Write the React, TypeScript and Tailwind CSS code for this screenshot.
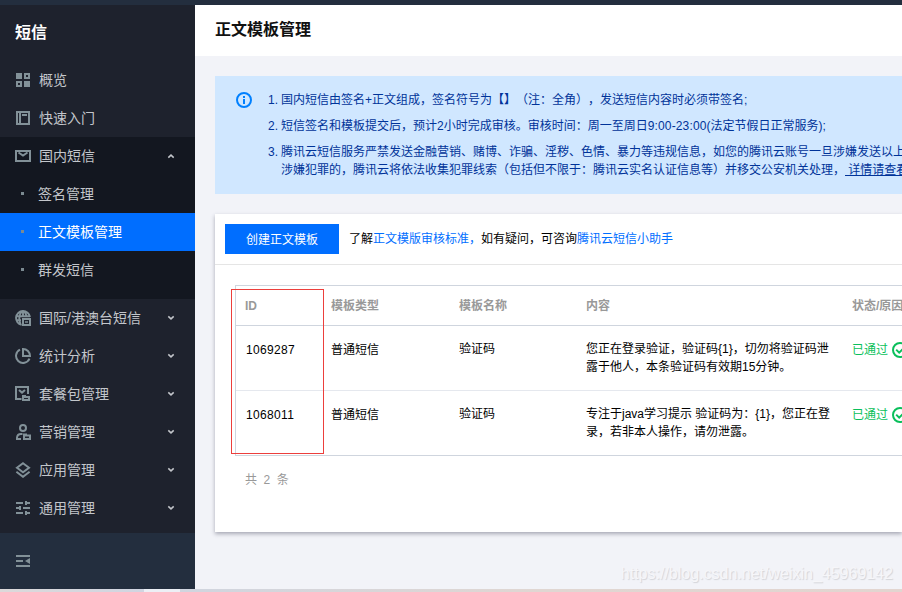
import React from "react";

const ICONS: Record<string, React.ReactNode> = {
  overview: (
    <g fill="currentColor" shapeRendering="crispEdges">
      <path d="M1 1h6v6H1z" />
      <path fillRule="evenodd" d="M9 1h6v6H9zM11 3v2h2V3z" />
      <path fillRule="evenodd" d="M1 9h6v6H1zM3 11v2h2v-2z" />
      <path d="M9 9h6v6H9z" />
    </g>
  ),
  guide: (
    <g fill="currentColor" shapeRendering="crispEdges">
      <path fillRule="evenodd" d="M1 1h14v14H1zM3 3v10h1V3zM6 3v10h7V3z" />
      <path d="M7 4h5v2H7z" />
    </g>
  ),
  mail: (
    <g fill="none" stroke="currentColor" strokeWidth="2">
      <path d="M1 3h14v10H1z" shapeRendering="crispEdges" />
      <path d="M3.5 4.5L8 7.6l4.5-3.1" />
    </g>
  ),
  globe: (
    <g fill="none" stroke="currentColor" strokeWidth="1.9">
      <path d="M15 7A7 7 0 1 0 6.6 14.9M8 1v6M1 6.2h14M1.2 10.2H6M5.6 14.5C3.8 10 3.9 5 6.6 1.5M9.2 1.5c1.6 1.6 2.3 3.4 2.4 5.2" />
      <path d="M8 9h7v6H8z" strokeWidth="2" />
      <path d="M10 12h3" strokeWidth="1.4" />
    </g>
  ),
  chart: (
    <g fill="none" stroke="currentColor" strokeWidth="2">
      <path d="M5 1.6a7 7 0 1 0 9.5 9" />
      <path d="M8 1a7 7 0 0 1 7 7H8z" />
    </g>
  ),
  pack: (
    <g fill="none" stroke="currentColor" strokeWidth="2">
      <path d="M6.5 13H1V1h12v7" />
      <path d="M4 4l3 2.6L10 4" />
      <path d="M8 11h6v3H8zM7 10h4" />
    </g>
  ),
  person: (
    <g fill="none" stroke="currentColor" strokeWidth="2">
      <circle cx="8" cy="4" r="3" />
      <path d="M7.5 10H6a4 4 0 0 0-4 3.5V15h4" />
      <path d="M9 11.5h6V15H9zM8 10.5h4" />
    </g>
  ),
  layers: (
    <g fill="none" stroke="currentColor" strokeWidth="2">
      <path d="M8 1.3l6 4.5-6 4.5-6-4.5z" />
      <path d="M1.4 9.8L8 14.8l6.6-5" />
    </g>
  ),
  sliders: (
    <g fill="currentColor" shapeRendering="crispEdges">
      <path d="M1 2h7v2H1zM10 1h2v1h3v2h-3v1h-2zM1 7h3V6h2v4H4V9H1zM8 7h7v2H8zM1 12h7v2H1zM10 11h2v1h3v2h-3v1h-2z" />
    </g>
  ),
  fold: (
    <g fill="currentColor">
      <path d="M1 2h14v2H1zM1 7h7v2H1zM1 12h14v2H1z" />
      <path d="M15 5v6l-5-3z" />
    </g>
  ),
};

function Icon({ name }: { name: string }) {
  return (
    <svg viewBox="0 0 16 16" className="size-4 shrink-0 text-[#829198]">
      {ICONS[name]}
    </svg>
  );
}

function Chevron({ up = false }: { up?: boolean }) {
  return (
    <svg viewBox="0 0 8 6" className={up ? "mr-5 mb-px ml-auto h-1.5 w-2 rotate-180" : "mr-5 mb-px ml-auto h-1.5 w-2"}>
      <path d="M1.3 1.4L4 3.9l2.7-2.5" fill="none" stroke="#c3c6cb" strokeWidth="1.5" />
    </svg>
  );
}

function MenuItem({ icon, label, arrow }: { icon: string; label: string; arrow?: "up" | "down" }) {
  return (
    <div className="flex h-[38px] items-center pl-[15px]">
      <Icon name={icon} />
      <span className="ml-2">{label}</span>
      {arrow && <Chevron up={arrow === "up"} />}
    </div>
  );
}

function SubItem({ label, active = false }: { label: string; active?: boolean }) {
  return (
    <div className={active ? "flex h-[38px] items-center bg-[#006eff] pl-[21px] text-white" : "flex h-[38px] items-center pl-[21px]"}>
      <span className="mb-px size-[3px] bg-[#7b8a91]" />
      <span className="ml-3.5">{label}</span>
    </div>
  );
}

function Sidebar() {
  return (
    <aside className="flex w-[195px] shrink-0 flex-col bg-[#1e222d] text-sm text-[#c3c6cb]">
      <h2 className="h-14 pl-[15px] text-base leading-[55px] font-bold text-white">短信</h2>
      <MenuItem icon="overview" label="概览" />
      <MenuItem icon="guide" label="快速入门" />
      <div className="bg-[#131720] pb-2.5">
        <MenuItem icon="mail" label="国内短信" arrow="up" />
        <SubItem label="签名管理" />
        <SubItem label="正文模板管理" active />
        <SubItem label="群发短信" />
      </div>
      <MenuItem icon="globe" label="国际/港澳台短信" arrow="down" />
      <MenuItem icon="chart" label="统计分析" arrow="down" />
      <MenuItem icon="pack" label="套餐包管理" arrow="down" />
      <MenuItem icon="person" label="营销管理" arrow="down" />
      <MenuItem icon="layers" label="应用管理" arrow="down" />
      <MenuItem icon="sliders" label="通用管理" arrow="down" />
      <div className="mt-auto flex h-14 items-center bg-[#232e3e] pl-[15px]">
        <Icon name="fold" />
      </div>
    </aside>
  );
}

function Notice() {
  return (
    <section className="mt-5 ml-5 flex h-[118px] bg-[#d0e7ff] pt-[15px] pl-[21px] text-[#003399]">
      <svg viewBox="0 0 16 16" className="mt-px size-4 shrink-0">
        <circle cx="8" cy="8" r="7" fill="none" stroke="#0080ff" strokeWidth="2" />
        <path d="M7 4h2v2H7zM7 7h2v5H7z" fill="#0080ff" />
      </svg>
      <ol className="ml-4 flex flex-col gap-2 leading-[18px]">
        <li className="flex">
          <span className="w-[13px] shrink-0">1.</span>
          <span>国内短信由签名+正文组成，签名符号为【】（注：全角），发送短信内容时必须带签名;</span>
        </li>
        <li className="flex">
          <span className="w-[13px] shrink-0">2.</span>
          <span>
            短信签名和模板提交后，预计2小时完成审核。审核时间：周一至周日
            <span className="tracking-[0.15px]">9:00-23:00</span>(法定节假日正常服务);
          </span>
        </li>
        <li className="flex">
          <span className="w-[13px] shrink-0">3.</span>
          <span>
            腾讯云短信服务严禁发送金融营销、赌博、诈骗、淫秽、色情、暴力等违规信息，如您的腾讯云账号一旦涉嫌发送以上
            <br />
            涉嫌犯罪的，腾讯云将依法收集犯罪线索（包括但不限于：腾讯云实名认证信息等）并移交公安机关处理，
            <a className="underline">&nbsp;详情请查看</a>
          </span>
        </li>
      </ol>
    </section>
  );
}

const COLS = "grid grid-cols-[95px_128px_127px_266px_60px]";

function Row({ id, lines, last = false }: { id: string; lines: string[]; last?: boolean }) {
  return (
    <div className={last ? `${COLS} h-[65px] border-b border-[#cfd5de] pt-3.5 leading-[18px]` : `${COLS} h-[65px] border-b border-[#e5e8ee] pt-3.5 leading-[18px]`}>
      <span className="pt-px pl-2.5 tracking-[0.33px]">{id}</span>
      <span className="pt-px">普通短信</span>
      <span>验证码</span>
      <span>
        {lines[0]}
        <br />
        {lines[1]}
      </span>
      <span className="flex h-5 items-center text-[#0abf5b]">
        已通过
        <svg viewBox="0 0 16 16" className="ml-1 size-4 shrink-0">
          <circle cx="8" cy="8" r="7" fill="none" stroke="#0abf5b" strokeWidth="2" />
          <path d="M4.2 7.6l3 3 4.5-4.5" fill="none" stroke="#0abf5b" strokeWidth="2" />
        </svg>
      </span>
    </div>
  );
}

function TemplateCard() {
  return (
    <section className="mt-5 ml-5 h-[318px] bg-white text-black shadow-[0_2px_4px_rgba(54,58,80,0.4)]">
      <div className="flex h-[51px] items-center border-b border-[#e5e5e5] pl-2.5">
        <button className="h-[30px] w-[114px] bg-[#006eff] pt-px text-white">创建正文模板</button>
        <p className="ml-2.5">
          了解<a className="text-[#006eff]">正文模版审核标准，</a>如有疑问，可咨询
          <a className="text-[#006eff]">腾讯云短信小助手</a>
        </p>
      </div>
      <div className="relative mt-5 ml-5 border-t border-l border-[#cfd5de]">
        <div className={`${COLS} h-10 items-center border-b border-[#cfd5de] font-bold text-[#999]`}>
          <span className="pl-[9px]">ID</span>
          <span>模板类型</span>
          <span>模板名称</span>
          <span>内容</span>
          <span>状态/原因</span>
        </div>
        <Row id="1069287" lines={["您正在登录验证，验证码{1}，切勿将验证码泄", "露于他人，本条验证码有效期15分钟。"]} />
        <Row id="1068011" lines={["专注于java学习提示 验证码为：{1}，您正在登", "录，若非本人操作，请勿泄露。"]} last />
        <div className="absolute top-[3px] -left-[5px] h-[165px] w-[93px] border border-[#ec3f3c]" />
      </div>
      <div className="mt-[15px] ml-[30px] flex gap-[6.5px] leading-[18px] text-[#999]">
        <span>共</span>
        <span>2</span>
        <span>条</span>
      </div>
    </section>
  );
}

export default function App() {
  return (
    <div className="relative flex h-[592px] w-[902px] flex-col overflow-hidden bg-[#f2f3f8] font-['Liberation_Sans','Noto_Sans_CJK_SC',sans-serif] text-xs whitespace-nowrap [text-spacing-trim:space-all]">
      <div className="h-[5px] shrink-0 bg-[#232e3e]" />
      <div className="flex min-h-0 flex-1">
        <Sidebar />
        <main className="min-w-0 flex-1 overflow-hidden">
          <header className="h-[51px] bg-white pl-5 text-base leading-[49px] font-bold text-[#111]">正文模板管理</header>
          <Notice />
          <TemplateCard />
        </main>
      </div>
      <div className="flex h-[3px] shrink-0">
        <div className="w-[144px] bg-linear-to-r from-[#dcd9da] to-[#d0d5e1]" />
        <div className="w-9 bg-[#eceff5]" />
        <div className="flex-1 bg-linear-to-r from-[#d0d5df] via-[#e0d6d2] to-[#e2d5d0]" />
      </div>
      <div className="absolute right-[9px] bottom-[6px] text-base text-[#f6f6f9] [text-shadow:1px_1px_1px_#d2d3d8]">
        https://blog.csdn.net/weixin_45969142
      </div>
    </div>
  );
}
